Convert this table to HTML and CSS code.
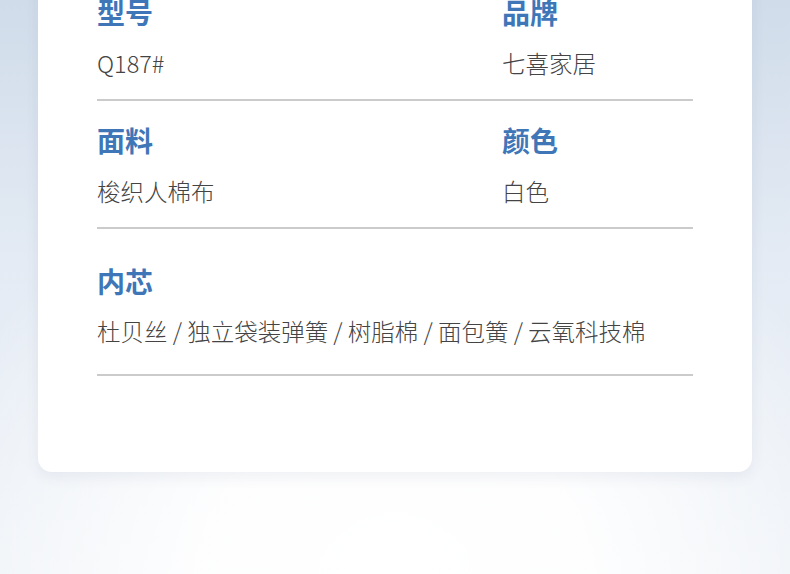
FILE: index.html
```html
<!DOCTYPE html>
<html lang="zh-CN">
<head>
  <meta charset="UTF-8">
  <meta name="viewport" content="width=device-width, initial-scale=1.0">
  <title>产品参数</title>
  <link rel="stylesheet" href="styles.css">
</head>
<body>
  <div class="card">
    <div class="spec-grid">
      <div class="spec-item">
        <div class="spec-label">型号</div>
        <div class="spec-value">Q187#</div>
      </div>
      <div class="spec-item">
        <div class="spec-label">品牌</div>
        <div class="spec-value">七喜家居</div>
      </div>
      <div class="spec-item">
        <div class="spec-label">面料</div>
        <div class="spec-value">梭织人棉布</div>
      </div>
      <div class="spec-item">
        <div class="spec-label">颜色</div>
        <div class="spec-value">白色</div>
      </div>
      <div class="spec-item spec-wide">
        <div class="spec-label">内芯</div>
        <div class="spec-value">杜贝丝 / 独立袋装弹簧 / 树脂棉 / 面包簧 / 云氧科技棉</div>
      </div>
    </div>
  </div>
</body>
</html>
```

FILE: styles.css
```css
html, body {
  height: 100%;
}
body {
  font-family: "Noto Sans CJK SC", "Noto Sans", sans-serif;
  margin: 0;
  padding: 0;
  overflow: hidden;
  background:
    radial-gradient(ellipse 62% 75% at 50% 100%, #ffffff 0%, rgba(255,255,255,0.9) 40%, rgba(255,255,255,0) 100%),
    linear-gradient(to bottom, #d0dcea 0%, #e4ebf4 45%, #eef2f7 100%);
}
.card {
  background-color: #ffffff;
  margin: -27px 38px 0;
  padding: 0 59px 96px;
  border-radius: 0 0 14px 14px;
  box-shadow: 0 5px 14px rgba(60,80,110,0.08);
}
.spec-grid {
  display: grid;
  grid-template-columns: 405px 1fr;
}
.spec-item {
  padding: 25px 0 24px;
  border-bottom: 2px solid #cbcbcb;
}
.spec-wide {
  grid-column: 1 / -1;
  padding: 38px 0 31px;
}
.spec-label {
  font-size: 28px;
  line-height: 28px;
  font-weight: 700;
  color: #3e76b8;
}
.spec-value {
  margin-top: 26px;
  font-size: 23.5px;
  line-height: 23px;
  font-weight: 300;
  color: #444444;
}
.spec-wide .spec-value {
  margin-top: 25px;
}
```
